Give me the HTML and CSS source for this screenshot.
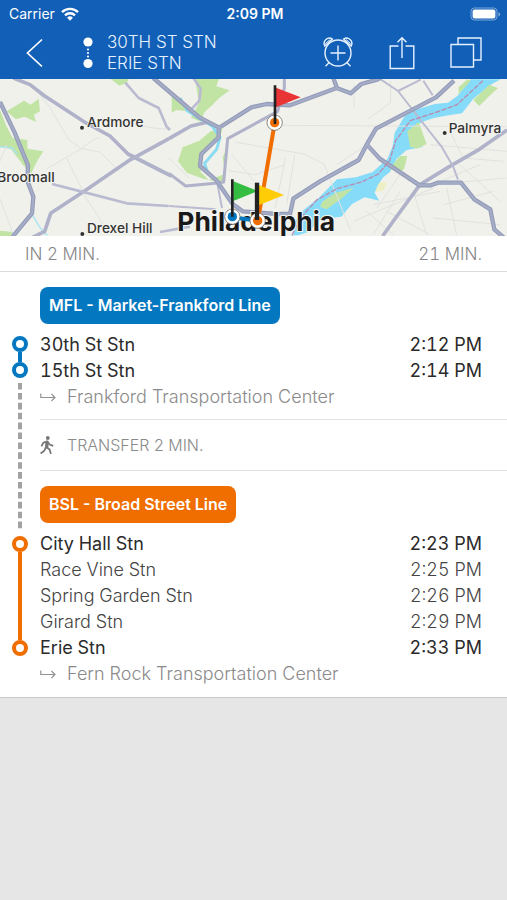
FILE: index.html
```html
<!DOCTYPE html>
<html lang="en">
<head>
<meta charset="utf-8">
<meta name="viewport" content="width=device-width, initial-scale=1">
<title>30th St Stn to Erie Stn</title>
<link rel="stylesheet" href="styles.css">
</head>
<body>
<header class="header">
  <div class="status">
    <div class="carrier">
      <span>Carrier</span>
      <svg width="18" height="14" viewBox="0 0 18 14" aria-hidden="true">
        <g fill="none" stroke="#fff" stroke-width="2.4">
          <path d="M1 5.2a11.4 11.4 0 0 1 16 0"/>
          <path d="M4 8.4a7 7 0 0 1 10 0"/>
        </g>
        <path d="M9 13.8 6.1 10.7a4.2 4.2 0 0 1 5.8 0z" fill="#fff"/>
      </svg>
    </div>
    <time class="clock">2:09 PM</time>
    <svg class="battery" width="31" height="14" viewBox="0 0 31 14" aria-hidden="true">
      <rect x="1" y="1" width="26" height="12" rx="3.5" fill="none" stroke="#fff" stroke-opacity=".45"/>
      <rect x="2.6" y="2.4" width="22.8" height="9.2" rx="2" fill="#fff"/>
      <path d="M28.5 5v4.4q1.6-.8 1.6-2.2T28.500 5z" fill="#fff" fill-opacity=".5"/>
    </svg>
  </div>
  <nav class="nav">
    <button class="icon-button" aria-label="Back">
      <svg width="18" height="30" viewBox="0 0 18 30"><path d="M17 1.500 2.500 15 17 28.500" fill="none" stroke="#fff" stroke-width="1.700"/></svg>
    </button>
    <svg class="route-icon" width="10" height="32" viewBox="0 0 10 32" fill="#fff" aria-hidden="true">
      <circle cx="5" cy="5" r="4.600"/><circle cx="5" cy="26.500" r="4.600"/>
      <circle cx="5" cy="12.500" r="1.100"/><circle cx="5" cy="16" r="1.100"/><circle cx="5" cy="19.500" r="1.100"/>
    </svg>
    <h1 class="title"><span>30TH ST STN</span><span>ERIE STN</span></h1>
    <div class="actions">
      <button class="icon-button" aria-label="Add alarm">
        <svg width="32" height="32" viewBox="0 0 32 32" fill="none" stroke="#e6f1ff" stroke-width="1.400">
          <circle cx="16" cy="16" r="13"/>
          <path d="M16 8.500v15M8.500 16h15M7.200 25.600l-3.700 3.700M24.800 25.600l3.700 3.700"/>
          <path d="M2.800 9a5.300 5.300 0 0 1 7.600-6.900zM29.200 9a5.300 5.300 0 0 0-7.600-6.900z"/>
          <path d="M3.300 6.600 8 2.600M28.700 6.600 24 2.600" stroke-width="1"/>
        </svg>
      </button>
      <button class="icon-button" aria-label="Share">
        <svg width="26" height="34" viewBox="0 0 26 34" fill="none" stroke="#e6f1ff" stroke-width="1.400">
          <path d="M9.500 10H1.200v22.500h23.600V10h-8.300M13 22V1.800M8.500 6.300 13 1.800l4.500 4.500"/>
        </svg>
      </button>
      <button class="icon-button" aria-label="Duplicate">
        <svg width="32" height="32" viewBox="0 0 32 32" fill="none" stroke="#e6f1ff" stroke-width="1.400">
          <path d="M1 7.500h22.500V30H1zM8 7.500V1h23v22h-7.500"/>
        </svg>
      </button>
    </div>
  </nav>
</header>

<main>
  <svg class="map" viewBox="0 3 1521 471" preserveAspectRatio="xMidYMid slice" role="img" aria-label="Route map of Philadelphia">
    <defs>
      <path id="motorways" d="M0 72l44 92 40 98-2 46 18 48-4 50-60 72M460 0l70 60 68 58 58 30 0 30-52 50-4 36 50 44 48 70 30 22 130 10M656 150l98-62 46-10 70 4 140-52 42 16 32-28 50-14 22-16M1000 0l10 28M840 408l30 0 10-46 80-52 116-64 24-46 28-48 180-94 54-50M1101 200l38 42 120 80 34 0 20-8h70l40 50 48 30 12 60 30 26"/>
    </defs>
    <rect y="0" width="1521" height="480" fill="#f1f1ec"/>
    <g fill="#c1e4a4">
      <path d="M20 100 72 68l20 12 24-18 4 38-18 10 6 22-34-16-26 8zM0 96l20 50 18 34 44 6v26l48 8-20 32-16 34-24-24-38-50-32-4zM0 458l40 4-10 12H0zM332 3h54l-6 12-22 8z"/>
      <path d="M585 3h72l-8 22 40 12-32 24-20 20-24 22-10 28-30-12 24-44zM515 54l20 12 44 40-18-6-32-4-14 8zM632 160l36-8-8 26-56 60-2 44 24 24 48-18-6-50 14-30-4 60-8 48-60-14-50-18-26-34 14-42 50-20z"/>
    </g>
    <path d="M1130 312l32 2-12 24-24 4z" fill="#eeeec4"/>
    <path d="M880 474l6-44 20-30 50-40 55-56 57-6 50-16 20-18 24-20 16-40 6-40 30-50 30-18 60-18 40-4 28-20 40-50h90l-30 16-52 42-34 44-40 6-44 8-30 10-26 14-16 50 40 12-50 10-30 26-20 40-20 16-16 22-10 24 14 24-44-10-38 20-32 38-60 6-40 40-30 10-24 0z" fill="#86dcf8"/>
    <path d="M968 370l40-26 52-14-36 32-44 32-20-8zM1222 160l34-28 24 66-30 14-20-6zM1200 234h22l-10 40-14 8-30-10zM1420 66l48-46 26 10-30 28-26 26zM1376 28l26-24 10 4-36 40z" fill="#c1e4a4"/>
    <path d="M540 60l22 38 40 26 34 20 24 34-10 36-36 42 8 26" fill="none" stroke="#8bdcf2" stroke-width="9"/>
    <path d="M0 206l36 4 16 18M98 412l20 34 14 18 10 8" fill="none" stroke="#a5e4f2" stroke-width="4"/>
    <g fill="none" stroke="#e1e1df" stroke-width="3">
      <path d="M112 40l36 46 58 98 38 28 56 10 58 58M244 212l-44 26-60 34M244 212q40-34 56-32M200 240l58 120 40 60 26 50M0 362l40 108M0 250l20-50"/>
      <path d="M400 140l60 10 46 4M780 120l60 22 680 4M704 192l208 36 60 30 80 200M696 230l66 80M884 230l-24 150M856 240l-30 150M686 278l80 12 90-30M507 240l60 60"/>
      <path d="M1062 20v70M1172 10v64l-70 50M1011 260l90-60M1200 340l-80 130M1160 400l130 70M1240 340l40 130M1340 330l30 140M1290 200l230 20M1350 160l40 80 120 10M1380 260l120 110M1120 380l200-40M1200 290l-70 100M1060 430l240-100M1300 420l200 20M1100 400l80 70M1440 260l-140 60 220-20M1330 380l150-40"/>
    </g>
    <g fill="none" stroke="#b0b2c9" stroke-width="11" stroke-linejoin="round">
      <path d="M40 0l50 20 44 34 116 76 80 44 54 54 130 66M507 182L386 248 258 336 152 406l-18 54-40 20"/>
      <path d="M507 182l66-38 52-12"/>
      <path d="M1148 474l30-42 82-112 88-54 90-52 83-58"/>
      <path d="M507 286l50 38 88-8 26-4 12-130 150-82 20-70 0-46" stroke-width="9"/>
    </g>
    <g fill="none" stroke="#babbd0" stroke-width="8" stroke-linejoin="round">
      <path d="M376 14l40 46 60 30 24 56 10 10M156 318l110 28 114 30 126 8M480 462l90-16M580 0l22 32-4 36-22 24"/>
      <path d="M1140 3l54 36 68-34M1194 39l70 90 60 76 36 62 14 38M1270 8l28 44M652 316l14 74M507 384l140 10" stroke-width="6"/>
    </g>
    <g fill="none" stroke-linejoin="round">
      <use href="#motorways" stroke="#949cba" stroke-width="13"/>
      <use href="#motorways" stroke="#a6adc6" stroke-width="6"/>
    </g>
    <path d="M876 472l24-50 50-56 61-34 74-20 50-24 34-40 18-60 44-60 80-26 60-22 80-74" fill="none" stroke="#b98bb0" stroke-width="4" stroke-dasharray="16 4"/>
    <g class="place">
      <circle cx="246" cy="149" r="6"/><text x="261" y="148">Ardmore</text>
      <text x="-8" y="311">Broomall</text>
      <circle cx="247" cy="468" r="6"/><text x="261" y="466">Drexel Hill</text>
      <circle cx="1334" cy="165" r="6"/><text x="1346" y="164">Palmyra</text>
    </g>
    <text class="city" x="532" y="460">Philadelphia</text>
    <path d="M697 418l76 10" stroke="#0378c0" stroke-width="12"/>
    <path d="M824 136L774 426" stroke="#f06d00" stroke-width="12"/>
    <g fill="#fff" stroke="#77706a" stroke-width="2.500">
      <circle cx="824" cy="134" r="23"/><circle cx="697" cy="416" r="23"/><circle cx="773" cy="428" r="23"/>
    </g>
    <circle cx="824" cy="134" r="14" fill="#f06d00"/><circle cx="697" cy="416" r="14" fill="#0378c0"/><circle cx="773" cy="428" r="14" fill="#f06d00"/>
    <path d="M828 29l74 29-74 30z" fill="#e93436"/>
    <path d="M700 310l74 29-74 30z" fill="#35bd42"/>
    <path d="M776 321l76 30-76 31z" fill="#ffcc05"/>
    <path d="M825 22v116M697 304v112" stroke="#222" stroke-width="8"/><path d="M771 314v112" stroke="#222" stroke-width="13"/>
  </svg>

  <div class="summary"><span>IN 2 MIN.</span><span>21 MIN.</span></div>

  <div class="itinerary">
    <div class="rail" aria-hidden="true">
      <i class="node blue"></i><i class="link blue short"></i><i class="node blue"></i>
      <svg class="walk-line" width="4" viewBox="0 0 4 146" preserveAspectRatio="none"><path d="M2 0v146" fill="none" stroke="#a2a2a2" stroke-width="4" stroke-dasharray="6.600 3.300"/></svg>
      <i class="node orange"></i><i class="link orange long"></i><i class="node orange"></i>
    </div>
    <div class="legs">
      <section class="leg">
        <h2 class="line blue">MFL - Market-Frankford Line</h2>
        <ol class="stops">
          <li class="stop main"><span>30th St Stn</span><time>2:12 PM</time></li>
          <li class="stop main"><span>15th St Stn</span><time>2:14 PM</time></li>
        </ol>
        <p class="toward">
          <svg width="16" height="10" viewBox="0 0 16 10" fill="none" stroke="#929292" stroke-width="1.200" aria-hidden="true"><path d="M.8 1.500v4h14M11.500 2l3.500 3.500L11.500 9"/></svg>
          <span>Frankford Transportation Center</span>
        </p>
      </section>
      <p class="transfer">
        <svg width="14" height="18" viewBox="0 0 14 18" aria-hidden="true">
          <circle cx="7.800" cy="2" r="1.900" fill="#777"/>
          <path d="M7 5.500 6.200 11M6.500 5.500 3.200 6.800 1.800 9.600M7.500 5.500l2 3 3 1.200M6.400 11l3.200 2.500 1.100 3.700M5.800 11.500l-1.500 3.200L1.200 17" fill="none" stroke="#777" stroke-width="1.800" stroke-linecap="round" stroke-linejoin="round"/>
          <path d="M5.500 5h2.800l.2 5.800-3.300.8z" fill="#777"/>
        </svg>
        <span>TRANSFER 2 MIN.</span>
      </p>
      <section class="leg">
        <h2 class="line orange">BSL - Broad Street Line</h2>
        <ol class="stops">
          <li class="stop main"><span>City Hall Stn</span><time>2:23 PM</time></li>
          <li class="stop"><span>Race Vine Stn</span><time>2:25 PM</time></li>
          <li class="stop"><span>Spring Garden Stn</span><time>2:26 PM</time></li>
          <li class="stop"><span>Girard Stn</span><time>2:29 PM</time></li>
          <li class="stop main"><span>Erie Stn</span><time>2:33 PM</time></li>
        </ol>
        <p class="toward">
          <svg width="16" height="10" viewBox="0 0 16 10" fill="none" stroke="#929292" stroke-width="1.200" aria-hidden="true"><path d="M.8 1.500v4h14M11.500 2l3.500 3.500L11.500 9"/></svg>
          <span>Fern Rock Transportation Center</span>
        </p>
      </section>
    </div>
  </div>
</main>
</body>
</html>
```
FILE: styles.css
```css
* { box-sizing: border-box; }

body {
  margin: 0;
  min-height: 100vh;
  background: #e6e6e6;
  color: #333;
  font-family: Inter, "Liberation Sans", sans-serif;
  font-size: 18px;
  font-weight: 300;
  line-height: 26px;
}

h1, h2, p, ol { margin: 0; padding: 0; font-weight: inherit; font-size: inherit; }
ol { list-style: none; }
svg { display: block; flex: none; }
.stops, .summary { font-variant-numeric: tabular-nums; }

.header { background: #115fb7; color: #fff; }

.status {
  display: grid;
  grid-template-columns: 1fr auto 1fr;
  align-items: center;
  height: 27px;
  padding: 0 6px 0 9px;
  font-size: 14px;
  font-weight: 400;
}
.carrier { display: flex; align-items: center; gap: 6px; }
.clock { font-weight: 600; }
.battery { justify-self: end; }

.nav {
  display: flex;
  align-items: center;
  height: 52px;
  padding: 0 25px;
}
.icon-button {
  display: flex;
  padding: 0;
  border: 0;
  background: none;
}
.route-icon { margin: 0 14px 0 40px; }
.title { display: grid; font-size: 17px; line-height: 21px; color: #e6f1ff; }
.actions { display: flex; align-items: center; gap: 35px; margin-left: auto; }

.map { width: 100%; height: 157px; }
.place { font-size: 41px; font-weight: 500; fill: #333; stroke: #f4f4f0; stroke-width: 5px; paint-order: stroke; }
.city { font-size: 79px; font-weight: 700; fill: #191919; stroke: #f4f4f0; stroke-width: 6px; paint-order: stroke; }

.summary {
  display: flex;
  justify-content: space-between;
  align-items: center;
  height: 36px;
  padding: 0 25px;
  border-bottom: 1px solid #dcdcdc;
  background: #fff;
  color: #858585;
  font-size: 17px;
}

.itinerary {
  display: grid;
  grid-template-columns: 40px 1fr;
  background: #fff;
  border-bottom: 1px solid #cbcbcb;
}
.rail {
  display: flex;
  flex-direction: column;
  align-items: center;
  padding: 64px 0 41px;
}
.node { width: 16px; height: 16px; border: 4px solid; border-radius: 50%; }
.node.blue { border-color: #0378c0; }
.node.orange { border-color: #f06d00; }
.link { width: 4px; }
.link.short { height: 10px; }
.link.long { height: 88px; }
.walk-line { flex: 1; min-height: 0; margin: 5px 0 7px; }

.blue { background: #0378c0; }
.orange { background: #f06d00; }
.node.blue, .node.orange { background: #fff; }

.leg { padding: 15px 25px 9px 0; }
.line {
  width: fit-content;
  margin-bottom: 8px;
  padding: 0 9px;
  border-radius: 8px;
  color: #fff;
  font-size: 16px;
  font-weight: 600;
  line-height: 37px;
}
.stop { display: flex; justify-content: space-between; color: #444; }
.stop.main { color: #2b2b2b; font-weight: 400; }
.toward, .transfer { display: flex; align-items: center; color: #8a8a8a; }
.toward { gap: 11px; }
.transfer {
  gap: 13px;
  height: 52px;
  border: solid #e3e3e3;
  border-width: 1px 0;
  font-size: 16px;
}
```
